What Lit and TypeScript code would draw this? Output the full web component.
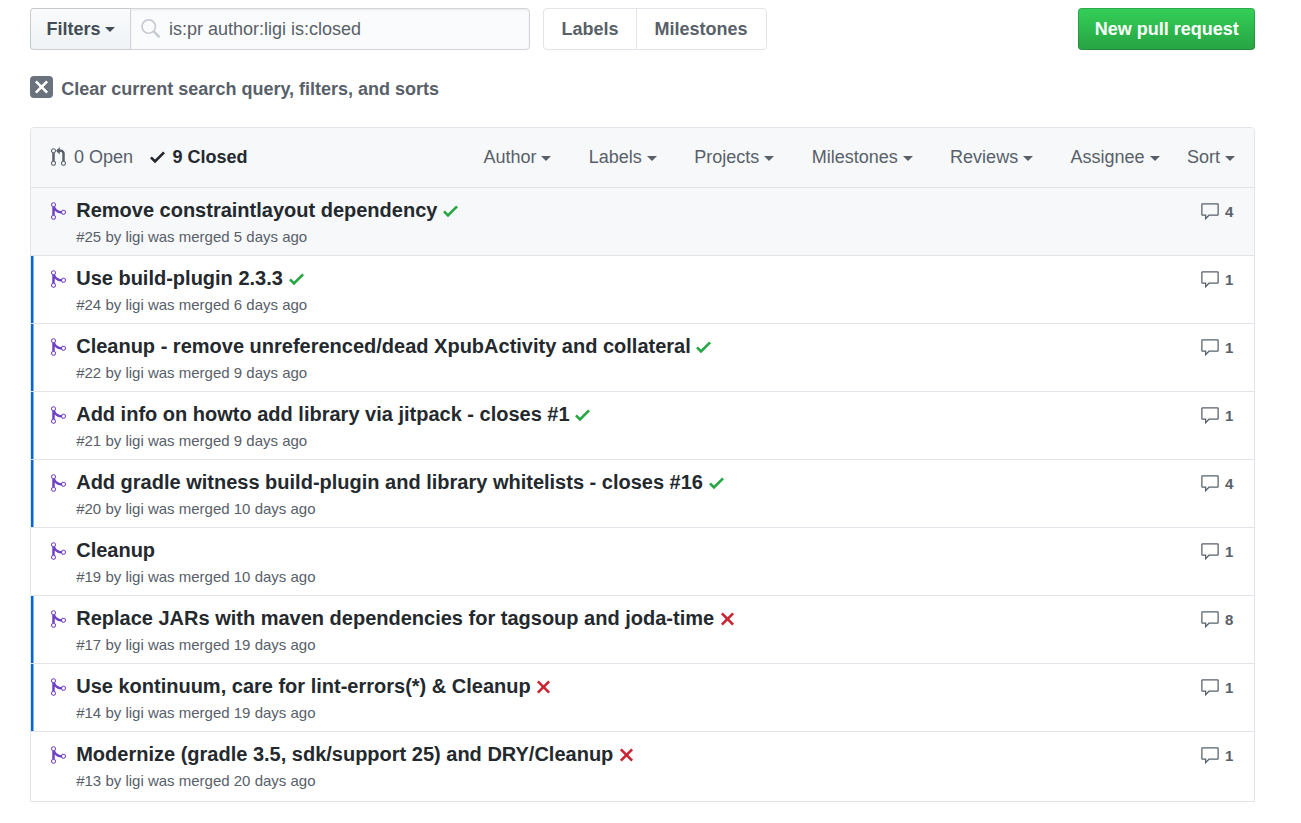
import { LitElement, html, css, nothing } from "lit";
import { customElement, property } from "lit/decorators.js";

const ICONS: Record<string, { w: number; d: string }> = {
  pull: { w: 12, d: "M11 11.28V5c-.03-.78-.34-1.47-.94-2.06C9.46 2.35 8.78 2.03 8 2H7V0L4 3l3 3V4h1c.27.02.48.11.69.31.21.2.3.42.31.69v6.28A1.993 1.993 0 0 0 10 15a1.993 1.993 0 0 0 1-3.72zm-1 2.92c-.66 0-1.2-.55-1.2-1.2 0-.65.55-1.2 1.2-1.2.65 0 1.2.55 1.2 1.2 0 .65-.55 1.2-1.2 1.2zM4 3c0-1.11-.89-2-2-2a1.993 1.993 0 0 0-1 3.72v6.56A1.993 1.993 0 0 0 2 15a1.993 1.993 0 0 0 1-3.72V4.72c.59-.34 1-.98 1-1.72zm-.8 10c0 .66-.55 1.2-1.2 1.2-.65 0-1.2-.55-1.2-1.2 0-.65.55-1.2 1.2-1.2.65 0 1.2.55 1.2 1.2zM2 4.2C1.34 4.2.8 3.65.8 3c0-.65.55-1.2 1.2-1.2.65 0 1.2.55 1.2 1.2 0 .65-.55 1.2-1.2 1.2z" },
  merge: { w: 12, d: "M10 7c-.73 0-1.38.41-1.73 1.02V8C7.22 7.98 6 7.64 5.14 6.98c-.75-.58-1.5-1.61-1.89-2.44A1.993 1.993 0 0 0 2 .99C.89.99 0 1.89 0 3a2 2 0 0 0 1 1.72v6.56c-.59.35-1 .99-1 1.72 0 1.11.89 2 2 2a1.993 1.993 0 0 0 1-3.72V7.67c.67.7 1.44 1.27 2.3 1.69.86.42 2.03.63 2.97.64v-.02c.36.61 1 1.02 1.73 1.02 1.11 0 2-.89 2-2 0-1.11-.89-2-2-2zm-6.8 6c0 .66-.55 1.2-1.2 1.2-.65 0-1.2-.55-1.2-1.2 0-.65.55-1.2 1.2-1.2.65 0 1.2.55 1.2 1.2zM2 4.2C1.34 4.2.8 3.65.8 3c0-.65.55-1.2 1.2-1.2.65 0 1.2.55 1.2 1.2 0 .65-.55 1.2-1.2 1.2zm8 6c-.66 0-1.2-.55-1.2-1.2 0-.65.55-1.2 1.2-1.2.65 0 1.2.55 1.2 1.2 0 .65-.55 1.2-1.2 1.2z" },
  check: { w: 12, d: "M12 5l-8 8-4-4 1.5-1.5L4 10l6.5-6.5z" },
  x: { w: 12, d: "M7.48 8l3.75 3.75-1.48 1.48L6 9.48l-3.75 3.75-1.48-1.48L4.52 8 .77 4.25l1.48-1.48L6 6.52l3.75-3.75 1.48 1.48z" },
  comment: { w: 16, d: "M14 1H2c-.55 0-1 .45-1 1v8c0 .55.45 1 1 1h2v3.5L7.5 11H14c.55 0 1-.45 1-1V2c0-.55-.45-1-1-1zm0 9H7l-2 2v-2H2V2h12v8z" },
  search: { w: 16, d: "M15.7 13.3l-3.81-3.83A5.93 5.93 0 0 0 13 6c0-3.31-2.69-6-6-6S1 2.69 1 6s2.69 6 6 6c1.3 0 2.48-.41 3.47-1.11l3.83 3.81c.19.2.45.3.7.3.25 0 .52-.09.7-.3a.996.996 0 0 0 0-1.41v.01zM7 10.7c-2.59 0-4.7-2.11-4.7-4.7 0-2.59 2.11-4.7 4.7-4.7 2.59 0 4.7 2.11 4.7 4.7 0 2.59-2.11 4.7-4.7 4.7z" },
};

const icon = (name: string) => {
  const { w, d } = ICONS[name];
  return html`<svg class="icon icon-${name}" width=${w * 1.25} height="20" viewBox="0 0 ${w} 16" aria-hidden="true"><path fill-rule="evenodd" d=${d}></path></svg>`;
};

interface Pull {
  id: number;
  title: string;
  days: number;
  comments: number;
  status?: "check" | "x";
  unread?: boolean;
}

const PULLS: Pull[] = [
  { id: 25, title: "Remove constraintlayout dependency", days: 5, comments: 4, status: "check" },
  { id: 24, title: "Use build-plugin 2.3.3", days: 6, comments: 1, status: "check", unread: true },
  { id: 22, title: "Cleanup - remove unreferenced/dead XpubActivity and collateral", days: 9, comments: 1, status: "check", unread: true },
  { id: 21, title: "Add info on howto add library via jitpack - closes #1", days: 9, comments: 1, status: "check", unread: true },
  { id: 20, title: "Add gradle witness build-plugin and library whitelists - closes #16", days: 10, comments: 4, status: "check", unread: true },
  { id: 19, title: "Cleanup", days: 10, comments: 1 },
  { id: 17, title: "Replace JARs with maven dependencies for tagsoup and joda-time", days: 19, comments: 8, status: "x", unread: true },
  { id: 14, title: "Use kontinuum, care for lint-errors(*) & Cleanup", days: 19, comments: 1, status: "x", unread: true },
  { id: 13, title: "Modernize (gradle 3.5, sdk/support 25) and DRY/Cleanup", days: 20, comments: 1, status: "x" },
];

const MENUS = ["Author", "Labels", "Projects", "Milestones", "Reviews", "Assignee", "Sort"];

@customElement("pull-row")
class PullRow extends LitElement {
  @property({ attribute: false }) pull!: Pull;

  static styles = css`
    :host { display: block; }
    .row { display: flex; height: 67px; box-sizing: border-box; padding: 10px 20px 0 20px; }
    .unread { box-shadow: inset 2.5px 0 0 #0366d6; }
    .icon { fill: currentColor; display: block; flex: none; }
    .icon-merge { color: #6f42c1; margin-top: 3px; }
    .body { flex: 1; padding-left: 10.2px; }
    .title { display: flex; font-size: 20px; line-height: 25px; font-weight: 600; color: #24292e; white-space: nowrap; }
    .title .icon { margin: 3px 0 0 5.7px; }
    .icon-check { color: #28a745; }
    .icon-x { color: #cb2431; }
    .meta { margin-top: 5px; font-size: 15px; line-height: 18px; color: #586069; }
    .comments { display: flex; align-items: flex-start; width: 34px; color: #586069; font-size: 15px; line-height: 20px; font-weight: 600; }
    .comments .icon { margin-top: 4px; }
    .count { margin: 4px 0 0 5px; }
  `;

  render() {
    const p = this.pull;
    return html`<div class="row ${p.unread ? "unread" : ""}">
      ${icon("merge")}
      <div class="body">
        <div class="title"><span>${p.title}</span>${p.status ? icon(p.status) : nothing}</div>
        <div class="meta">#${p.id} by ligi was merged ${p.days} days ago</div>
      </div>
      <div class="comments">${icon("comment")}<span class="count">${p.comments}</span></div>
    </div>`;
  }
}

@customElement("app-root")
class AppRoot extends LitElement {
  static styles = css`
    :host { display: block; min-height: 823px; background: #fff; font-family: "Liberation Sans", Arial, sans-serif; font-size: 18px; line-height: 26px; color: #24292e; }
    .page { width: 1225px; padding: 8px 0 0 30px; }
    .icon { fill: currentColor; display: block; flex: none; }
    .toolbar { display: flex; height: 42px; }
    .toolbar > * { box-sizing: border-box; white-space: nowrap; }
    .filters { width: 101px; padding: 7px 0 0 15.4px; border: 1px solid rgba(27, 31, 35, 0.2); border-radius: 4px 0 0 4px; background: linear-gradient(-180deg, #fafbfc, #eff3f6 90%); font-weight: 600; color: #444d56; }
    .caret { display: inline-block; vertical-align: middle; border: 5px solid transparent; border-top-color: currentColor; border-bottom: 0; margin-left: 5px; }
    .filters .caret { margin-bottom: 2px; }
    .query { display: flex; width: 400px; margin-left: -1px; padding: 7px 0 0 9px; border: 1px solid #d1d5da; border-radius: 0 4px 4px 0; background: #fafbfc; box-shadow: inset 0 1px 2px rgba(27, 31, 35, 0.075); color: #586069; }
    .query .icon { color: #c6cbd1; margin: 3px 9px 0 0; }
    .nav { display: flex; width: 224px; margin-left: 13px; border: 1px solid #e1e4e8; border-radius: 4px; color: #586069; font-weight: 600; }
    .nav span { padding: 7px 0 0 17.5px; }
    .nav span:first-child { width: 74.5px; }
    .nav span + span { border-left: 1px solid #e1e4e8; }
    .primary { margin-left: auto; width: 177px; text-align: center; padding: 7px 0 0 0.6px; border: 1px solid rgba(27, 31, 35, 0.2); border-radius: 4px; color: #fff; font-weight: 600; background: linear-gradient(-180deg, #34d058, #28a745 90%); background-origin: border-box; }
    .clear { display: flex; margin-top: 26px; height: 51px; color: #586069; font-weight: 600; }
    .box { width: 23px; height: 22px; border-radius: 4px; background: #6a737d; color: #fff; display: grid; place-items: center; margin-right: 8.3px; }
    .list { border: 1px solid #e1e4e8; border-radius: 4px 4px 0 0; height: 673px; }
    .head { display: flex; height: 59px; box-sizing: border-box; background: #f6f8fa; border-radius: 3px 3px 0 0; color: #586069; padding: 16px 19px 0 20px; align-items: flex-start; }
    .head .icon { margin: 0 8px 0 0; }
    .closed { display: flex; align-items: center; color: #24292e; font-weight: 600; margin-left: 16.5px; }
    .open { display: flex; align-items: center; }
    .menus { display: flex; margin-left: auto; gap: 37.4px; }
    .menus span:last-child { margin-left: -10px; }
    pull-row { border-top: 1px solid #e1e4e8; }
    .first { background: #f6f8fa; }
  `;

  render() {
    return html`<div class="page">
      <div class="toolbar">
        <div class="filters">Filters<i class="caret"></i></div>
        <div class="query">${icon("search")}<span>is:pr author:ligi is:closed</span></div>
        <div class="nav"><span>Labels</span><span>Milestones</span></div>
        <div class="primary">New pull request</div>
      </div>
      <div class="clear"><div class="box">${icon("x")}</div><span>Clear current search query, filters, and sorts</span></div>
      <div class="list">
        <div class="head">
          <div class="open">${icon("pull")}<span>0 Open</span></div>
          <div class="closed">${icon("check")}<span>9 Closed</span></div>
          <div class="menus">${MENUS.map((m) => html`<span>${m}<i class="caret"></i></span>`)}</div>
        </div>
        ${PULLS.map((p, i) => html`<pull-row class=${i === 0 ? "first" : ""} .pull=${p}></pull-row>`)}
      </div>
    </div>`;
  }
}
